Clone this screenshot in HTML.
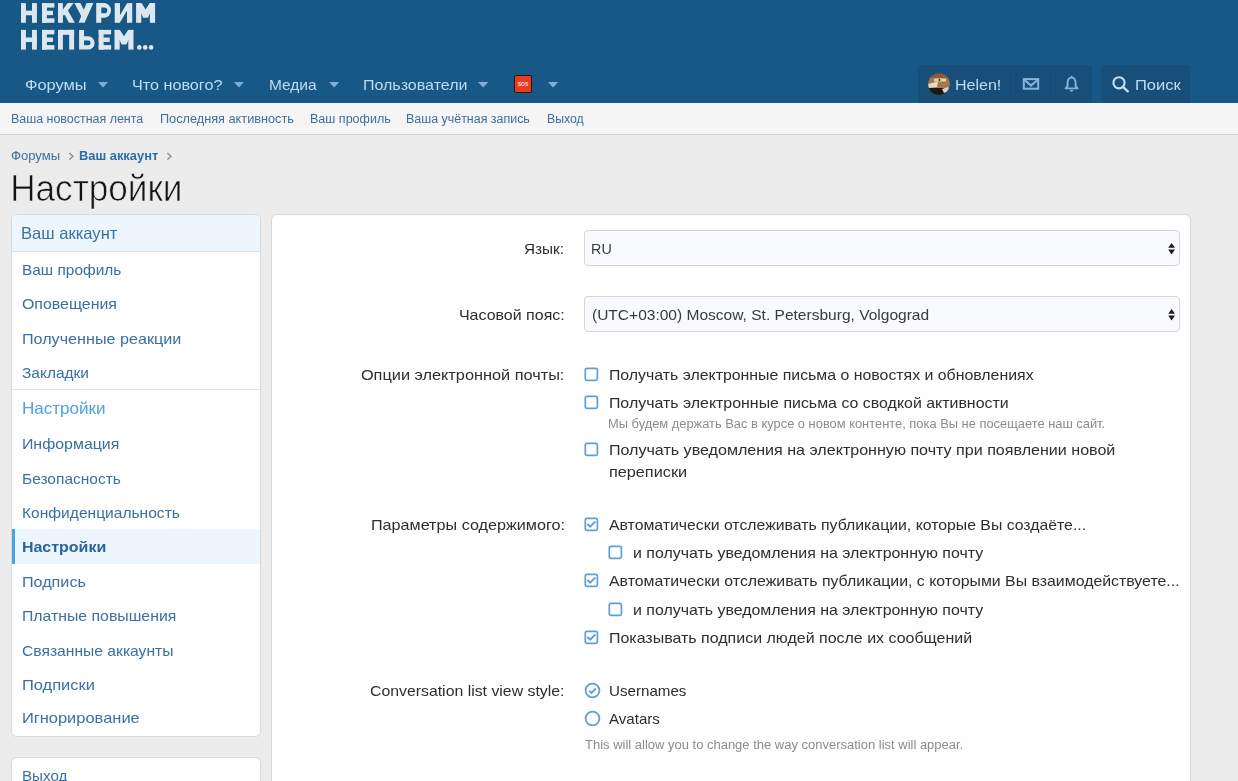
<!DOCTYPE html>
<html><head><meta charset="utf-8"><style>
html,body{margin:0;padding:0}
body{width:1238px;height:781px;overflow:hidden;position:relative;background:#ececec;font-family:"Liberation Sans", sans-serif}
.t{position:absolute;white-space:nowrap}
</style></head><body>
<div style="position:absolute;left:0px;top:0px;width:1238px;height:103px;background:#185886"></div>
<svg style="position:absolute;left:0;top:0" width="170" height="60" viewBox="0 0 170 60"><g fill="#dde7f0"><rect x="21" y="3.1" width="4.90" height="19.70"/><rect x="32" y="3.1" width="4.90" height="19.70"/><rect x="21" y="10.650000000000002" width="15.80" height="4.60"/><rect x="42" y="3.1" width="4.90" height="19.70"/><rect x="42" y="3.1" width="12.40" height="4.50"/><rect x="42" y="10.75" width="11.00" height="4.40"/><rect x="42" y="18.3" width="12.40" height="4.50"/><rect x="58" y="3.1" width="4.90" height="19.70"/><polygon points="62.50,10.20 67.60,3.10 73.60,3.10 64.50,15.20 62.50,15.20"/><polygon points="64.20,13.60 67.60,10.00 74.90,22.80 68.90,22.80"/><polygon points="86.60,3.10 93.40,3.10 84.60,22.80 78.60,22.80"/><polygon points="74.40,3.10 80.40,3.10 85.80,13.80 83.00,19.60"/><path fill-rule="evenodd" d="M96.2 3.1 H104 A7 7.35 0 0 1 104 17.8 H101.3 V22.8 H96.2 Z M101.3 7.6 V13.3 H104.4 A2.85 2.85 0 0 0 104.4 7.6 Z"/><rect x="114.7" y="3.1" width="5.30" height="19.70"/><rect x="127" y="3.1" width="5.20" height="19.70"/><polygon points="119.80,15.60 127.20,3.10 127.20,10.30 119.80,22.80"/><rect x="136.1" y="3.1" width="5.20" height="19.70"/><rect x="149.9" y="3.1" width="5.20" height="19.70"/><polygon points="136.10,3.10 141.50,3.10 145.60,9.50 149.70,3.10 155.10,3.10 147.90,17.80 143.30,17.80"/><rect x="21" y="29.9" width="4.90" height="19.70"/><rect x="32" y="29.9" width="4.90" height="19.70"/><rect x="21" y="37.45" width="15.80" height="4.60"/><rect x="42" y="29.9" width="4.90" height="19.70"/><rect x="42" y="29.9" width="12.40" height="4.50"/><rect x="42" y="37.55" width="11.00" height="4.40"/><rect x="42" y="45.1" width="12.40" height="4.50"/><rect x="58" y="29.9" width="16.10" height="4.90"/><rect x="58" y="29.9" width="4.90" height="19.70"/><rect x="69.2" y="29.9" width="4.90" height="19.70"/><path fill-rule="evenodd" d="M79.1 29.9 H84 V36.3 H88 A6.65 6.65 0 0 1 88 49.6 H79.1 Z M84 40.6 V45.3 H88.2 A2.35 2.35 0 0 0 88.2 40.6 Z"/><rect x="98.7" y="29.9" width="4.90" height="19.70"/><rect x="98.7" y="29.9" width="12.40" height="4.50"/><rect x="98.7" y="37.55" width="11.00" height="4.40"/><rect x="98.7" y="45.1" width="12.40" height="4.50"/><rect x="114.5" y="29.9" width="5.20" height="19.70"/><rect x="128.3" y="29.9" width="5.20" height="19.70"/><polygon points="114.50,29.90 119.90,29.90 124.00,36.30 128.10,29.90 133.50,29.90 126.30,44.50 121.70,44.50"/><circle cx="139.3" cy="47.4" r="2.3"/><circle cx="145.2" cy="47.4" r="2.3"/><circle cx="151.1" cy="47.4" r="2.3"/></g></svg>
<div class="t" style="left:25.18px;top:77px;font-size:15.00px;line-height:15.00px;color:#bfdcf4;font-weight:normal;transform:scaleX(1.0949);transform-origin:0.82px 0;">Форумы</div>
<svg style="position:absolute;left:98px;top:82px;overflow:visible" width="10" height="5.5"><polygon points="0,0 10,0 5.0,5.5" fill="#80afd9"/></svg>
<div class="t" style="left:132.00px;top:77px;font-size:15.00px;line-height:15.00px;color:#bfdcf4;font-weight:normal;transform:scaleX(1.0798);transform-origin:1.20px 0;">Что нового?</div>
<svg style="position:absolute;left:233.7px;top:82px;overflow:visible" width="9.800000000000011" height="5.5"><polygon points="0,0 9.800000000000011,0 4.900000000000006,5.5" fill="#80afd9"/></svg>
<div class="t" style="left:268.90px;top:77px;font-size:15.00px;line-height:15.00px;color:#bfdcf4;font-weight:normal;transform:scaleX(1.0328);transform-origin:1.20px 0;">Медиа</div>
<svg style="position:absolute;left:329px;top:82px;overflow:visible" width="10.199999999999989" height="5.5"><polygon points="0,0 10.199999999999989,0 5.099999999999994,5.5" fill="#80afd9"/></svg>
<div class="t" style="left:363.00px;top:77px;font-size:15.00px;line-height:15.00px;color:#bfdcf4;font-weight:normal;transform:scaleX(1.0679);transform-origin:1.20px 0;">Пользователи</div>
<svg style="position:absolute;left:477.8px;top:82px;overflow:visible" width="10.300000000000011" height="5.5"><polygon points="0,0 10.300000000000011,0 5.150000000000006,5.5" fill="#80afd9"/></svg>
<div style="position:absolute;left:514px;top:75px;width:18px;height:18px;background:#ec3b1c;border:1px solid #2a1410;box-sizing:border-box;border-radius:2px"></div>
<div style="position:absolute;left:514px;top:81px;width:18px;text-align:center;font:bold 5px/6px 'Liberation Sans',sans-serif;color:#fde">SOS</div>
<svg style="position:absolute;left:547.8px;top:82px;overflow:visible" width="10.200000000000045" height="5.5"><polygon points="0,0 10.200000000000045,0 5.100000000000023,5.5" fill="#80afd9"/></svg>
<div style="position:absolute;left:918px;top:65px;width:174px;height:38px;background:#174f7a;border-radius:4px 4px 0 0"></div>
<div style="position:absolute;left:1010px;top:65px;width:1px;height:38px;background:#154a73"></div>
<div style="position:absolute;left:1050px;top:65px;width:1px;height:38px;background:#154a73"></div>
<svg style="position:absolute;left:928px;top:73px" width="22" height="22" viewBox="0 0 22 22"><defs><clipPath id="av"><circle cx="11" cy="11" r="10.8"/></clipPath></defs><filter id="avb"><feGaussianBlur stdDeviation="0.55"/></filter><g clip-path="url(#av)"><g filter="url(#avb)">
<rect width="22" height="22" fill="#a5764c"/>
<rect x="0" y="0" width="22" height="5" fill="#8a5c38"/>
<rect x="6" y="5.5" width="12" height="3" fill="#e6cda6"/>
<circle cx="11.5" cy="7" r="0.9" fill="#2a1a10"/>
<polygon points="0,11 10,8.5 9,14 0,15" fill="#e8dcc0"/>
<rect x="0" y="15" width="22" height="7" fill="#1c1410"/>
<polygon points="14,16 20,14 22,18 16,20" fill="#d9d2c0"/>
</g></g></svg>
<div class="t" style="left:954.70px;top:77px;font-size:15.00px;line-height:15.00px;color:#bfdcf4;font-weight:normal;transform:scaleX(1.0686);transform-origin:1.20px 0;">Helen!</div>
<svg style="position:absolute;left:1022px;top:77px" width="18" height="14" viewBox="0 0 18 14"><rect x="1.8" y="2.1" width="14.4" height="9.6" fill="none" stroke="#86b4dc" stroke-width="2"/><polyline points="2,2.4 9,8.6 16,2.4" fill="none" stroke="#86b4dc" stroke-width="2"/></svg>
<svg style="position:absolute;left:1063px;top:75px" width="17" height="18" viewBox="0 0 17 18"><path d="M8.6 2.6 C5.6 2.6 4.6 5 4.6 8 L4.6 11.2 L2.6 13.4 L14.6 13.4 L12.6 11.2 L12.6 8 C12.6 5 11.6 2.6 8.6 2.6 Z" fill="none" stroke="#86b4dc" stroke-width="1.9" stroke-linejoin="round"/><path d="M6.8 15 A1.8 1.8 0 0 0 10.4 15 Z" fill="#86b4dc"/><circle cx="8.6" cy="1.8" r="1.1" fill="#86b4dc"/></svg>
<div style="position:absolute;left:1101px;top:65px;width:89px;height:38px;background:#174f7a;border-radius:4px 4px 0 0"></div>
<svg style="position:absolute;left:1111px;top:75px" width="19" height="19" viewBox="0 0 19 19"><circle cx="8" cy="7.8" r="5.6" fill="none" stroke="#c4e0f6" stroke-width="2.1"/><line x1="12" y1="11.8" x2="16.8" y2="16.4" stroke="#c4e0f6" stroke-width="2.3" stroke-linecap="round"/></svg>
<div class="t" style="left:1135.10px;top:77px;font-size:15.00px;line-height:15.00px;color:#bfdcf4;font-weight:normal;transform:scaleX(1.1008);transform-origin:1.20px 0;">Поиск</div>
<div style="position:absolute;left:0px;top:103px;width:1238px;height:31px;background:#f5f5f5"></div>
<div style="position:absolute;left:0px;top:134px;width:1238px;height:1px;background:#cdcdcd"></div>
<div class="t" style="left:10.80px;top:113px;font-size:12.50px;line-height:12.50px;color:#3a6fa1;font-weight:normal;transform:scaleX(0.9954);transform-origin:1.00px 0;">Ваша новостная лента</div>
<div class="t" style="left:159.80px;top:113px;font-size:12.50px;line-height:12.50px;color:#3a6fa1;font-weight:normal;transform:scaleX(1.0175);transform-origin:1.00px 0;">Последняя активность</div>
<div class="t" style="left:309.50px;top:113px;font-size:12.50px;line-height:12.50px;color:#3a6fa1;font-weight:normal;transform:scaleX(1.0025);transform-origin:1.00px 0;">Ваш профиль</div>
<div class="t" style="left:406.40px;top:113px;font-size:12.50px;line-height:12.50px;color:#3a6fa1;font-weight:normal;transform:scaleX(0.9948);transform-origin:1.00px 0;">Ваша учётная запись</div>
<div class="t" style="left:547.00px;top:113px;font-size:12.50px;line-height:12.50px;color:#3a6fa1;font-weight:normal;transform:scaleX(0.981);transform-origin:1.00px 0;">Выход</div>
<div class="t" style="left:10.88px;top:149px;font-size:13.00px;line-height:13.00px;color:#3a6fa1;font-weight:normal;transform:scaleX(1.0052);transform-origin:0.71px 0;">Форумы</div>
<svg style="position:absolute;left:68px;top:152px" width="7" height="8"><polyline points="1.4,1 5,4.2 1.4,7.4" fill="none" stroke="#8a8a8a" stroke-width="1.3"/></svg>
<div class="t" style="left:78.56px;top:149px;font-size:13.00px;line-height:13.00px;color:#2b6ea6;font-weight:bold;transform:scaleX(0.9901);transform-origin:0.84px 0;">Ваш аккаунт</div>
<svg style="position:absolute;left:166px;top:152px" width="7" height="8"><polyline points="1.4,1 5,4.2 1.4,7.4" fill="none" stroke="#8a8a8a" stroke-width="1.3"/></svg>
<div class="t" style="left:9.94px;top:170px;font-size:37.00px;line-height:37.00px;color:#141414;font-weight:normal;transform:scaleX(0.9498);transform-origin:2.96px 0;-webkit-text-stroke:0.7px #ececec;">Настройки</div>
<div style="position:absolute;left:11px;top:214px;width:250px;height:523px;background:#fefefe;border:1px solid #d9d9d9;border-radius:6px;box-sizing:border-box"></div>
<div style="position:absolute;left:12px;top:215px;width:248px;height:36px;background:#edf5fd;border-radius:5px 5px 0 0"></div>
<div style="position:absolute;left:12px;top:251px;width:248px;height:1px;background:#dde1e6"></div>
<div class="t" style="left:21.38px;top:225px;font-size:16.50px;line-height:16.50px;color:#3a70a3;font-weight:normal;transform:scaleX(1.0053);transform-origin:1.32px 0;">Ваш аккаунт</div>
<div class="t" style="left:21.70px;top:262px;font-size:15.00px;line-height:15.00px;color:#3a70a3;font-weight:normal;transform:scaleX(1.0285);transform-origin:1.20px 0;">Ваш профиль</div>
<div class="t" style="left:22.22px;top:296px;font-size:15.00px;line-height:15.00px;color:#3a70a3;font-weight:normal;transform:scaleX(1.0603);transform-origin:0.67px 0;">Оповещения</div>
<div class="t" style="left:21.70px;top:331px;font-size:15.00px;line-height:15.00px;color:#3a70a3;font-weight:normal;transform:scaleX(1.0768);transform-origin:1.20px 0;">Полученные реакции</div>
<div class="t" style="left:22.38px;top:365px;font-size:15.00px;line-height:15.00px;color:#3a70a3;font-weight:normal;transform:scaleX(1.032);transform-origin:0.53px 0;">Закладки</div>
<div style="position:absolute;left:12px;top:389px;width:248px;height:1px;background:#e1e1e1"></div>
<div class="t" style="left:21.58px;top:400px;font-size:16.50px;line-height:16.50px;color:#4ea2de;font-weight:normal;transform:scaleX(1.0337);transform-origin:1.32px 0;">Настройки</div>
<div class="t" style="left:21.70px;top:436px;font-size:15.00px;line-height:15.00px;color:#3a70a3;font-weight:normal;transform:scaleX(1.0611);transform-origin:1.20px 0;">Информация</div>
<div class="t" style="left:21.70px;top:471px;font-size:15.00px;line-height:15.00px;color:#3a70a3;font-weight:normal;transform:scaleX(1.0341);transform-origin:1.20px 0;">Безопасность</div>
<div class="t" style="left:21.70px;top:505px;font-size:15.00px;line-height:15.00px;color:#3a70a3;font-weight:normal;transform:scaleX(1.0381);transform-origin:1.20px 0;">Конфиденциальность</div>
<div style="position:absolute;left:12px;top:529px;width:248px;height:35px;background:#edf5fd"></div>
<div style="position:absolute;left:12px;top:529px;width:3px;height:35px;background:#47a3e3"></div>
<div class="t" style="left:21.92px;top:539px;font-size:15.00px;line-height:15.00px;color:#2765a0;font-weight:bold;transform:scaleX(1.0649);transform-origin:0.98px 0;">Настройки</div>
<div class="t" style="left:21.70px;top:574px;font-size:15.00px;line-height:15.00px;color:#3a70a3;font-weight:normal;transform:scaleX(1.0778);transform-origin:1.20px 0;">Подпись</div>
<div class="t" style="left:21.70px;top:608px;font-size:15.00px;line-height:15.00px;color:#3a70a3;font-weight:normal;transform:scaleX(1.0545);transform-origin:1.20px 0;">Платные повышения</div>
<div class="t" style="left:22.15px;top:643px;font-size:15.00px;line-height:15.00px;color:#3a70a3;font-weight:normal;transform:scaleX(1.0434);transform-origin:0.75px 0;">Связанные аккаунты</div>
<div class="t" style="left:21.70px;top:677px;font-size:15.00px;line-height:15.00px;color:#3a70a3;font-weight:normal;transform:scaleX(1.0984);transform-origin:1.20px 0;">Подписки</div>
<div class="t" style="left:21.70px;top:710px;font-size:15.00px;line-height:15.00px;color:#3a70a3;font-weight:normal;transform:scaleX(1.0974);transform-origin:1.20px 0;">Игнорирование</div>
<div style="position:absolute;left:11px;top:757px;width:250px;height:40px;background:#fefefe;border:1px solid #d9d9d9;border-radius:6px;box-sizing:border-box"></div>
<div class="t" style="left:21.80px;top:768px;font-size:15.00px;line-height:15.00px;color:#3a70a3;font-weight:normal;transform:scaleX(1.0109);transform-origin:1.20px 0;">Выход</div>
<div style="position:absolute;left:271px;top:214px;width:920px;height:600px;background:#fefefe;border:1px solid #d9d9d9;border-radius:6px;box-sizing:border-box"></div>
<div class="t" style="left:524.15px;top:241px;font-size:15.00px;line-height:15.00px;color:#2e2e2e;font-weight:normal;transform:scaleX(1.0202);transform-origin:0.75px 0;">Язык:</div>
<div style="position:absolute;left:584px;top:230px;width:596px;height:36px;background:#f8fafd;border:1px solid #d6d6d6;border-radius:4px;box-sizing:border-box"></div>
<div class="t" style="left:591.40px;top:241px;font-size:15.00px;line-height:15.00px;color:#3a3a3a;font-weight:normal;transform:scaleX(0.9546);transform-origin:1.20px 0;">RU</div>
<svg style="position:absolute;left:1167.5px;top:243px" width="8" height="12"><polygon points="0.2,4.8 3.6,0 7,4.8" fill="#1d1d1d"/><polygon points="0.2,6.6 7,6.6 3.6,11.4" fill="#1d1d1d"/></svg>
<div class="t" style="left:458.80px;top:307px;font-size:15.00px;line-height:15.00px;color:#2e2e2e;font-weight:normal;transform:scaleX(1.0654);transform-origin:1.20px 0;">Часовой пояс:</div>
<div style="position:absolute;left:584px;top:296px;width:596px;height:36px;background:#f8fafd;border:1px solid #d6d6d6;border-radius:4px;box-sizing:border-box"></div>
<div class="t" style="left:591.90px;top:307px;font-size:15.00px;line-height:15.00px;color:#3a3a3a;font-weight:normal;transform:scaleX(1.0355);transform-origin:0.90px 0;">(UTC+03:00) Moscow, St. Petersburg, Volgograd</div>
<svg style="position:absolute;left:1167.5px;top:309px" width="8" height="12"><polygon points="0.2,4.8 3.6,0 7,4.8" fill="#1d1d1d"/><polygon points="0.2,6.6 7,6.6 3.6,11.4" fill="#1d1d1d"/></svg>
<div class="t" style="left:361.32px;top:367px;font-size:15.00px;line-height:15.00px;color:#2e2e2e;font-weight:normal;transform:scaleX(1.0865);transform-origin:0.67px 0;">Опции электронной почты:</div>
<svg style="position:absolute;left:584px;top:367px" width="15" height="15" viewBox="0 0 15 15"><rect x="1.3" y="1.3" width="12.1" height="12.1" rx="1.6" fill="#fff" stroke="#5d9fd6" stroke-width="1.7"/></svg>
<div class="t" style="left:608.70px;top:367px;font-size:15.00px;line-height:15.00px;color:#2e2e2e;font-weight:normal;transform:scaleX(1.0577);transform-origin:1.20px 0;">Получать электронные письма о новостях и обновлениях</div>
<svg style="position:absolute;left:584px;top:395px" width="15" height="15" viewBox="0 0 15 15"><rect x="1.3" y="1.3" width="12.1" height="12.1" rx="1.6" fill="#fff" stroke="#5d9fd6" stroke-width="1.7"/></svg>
<div class="t" style="left:608.70px;top:395px;font-size:15.00px;line-height:15.00px;color:#2e2e2e;font-weight:normal;transform:scaleX(1.0619);transform-origin:1.20px 0;">Получать электронные письма со сводкой активности</div>
<div class="t" style="left:608.20px;top:418px;font-size:12.50px;line-height:12.50px;color:#8c8c8c;font-weight:normal;transform:scaleX(1.0303);transform-origin:1.00px 0;">Мы будем держать Вас в курсе о новом контенте, пока Вы не посещаете наш сайт.</div>
<svg style="position:absolute;left:584px;top:442px" width="15" height="15" viewBox="0 0 15 15"><rect x="1.3" y="1.3" width="12.1" height="12.1" rx="1.6" fill="#fff" stroke="#5d9fd6" stroke-width="1.7"/></svg>
<div class="t" style="left:608.70px;top:442px;font-size:15.00px;line-height:15.00px;color:#2e2e2e;font-weight:normal;transform:scaleX(1.0711);transform-origin:1.20px 0;">Получать уведомления на электронную почту при появлении новой</div>
<div class="t" style="left:608.95px;top:464px;font-size:15.00px;line-height:15.00px;color:#2e2e2e;font-weight:normal;transform:scaleX(1.0849);transform-origin:1.05px 0;">переписки</div>
<div class="t" style="left:370.70px;top:517px;font-size:15.00px;line-height:15.00px;color:#2e2e2e;font-weight:normal;transform:scaleX(1.0785);transform-origin:1.20px 0;">Параметры содержимого:</div>
<svg style="position:absolute;left:584px;top:517px" width="15" height="15" viewBox="0 0 15 15"><rect x="1.3" y="1.3" width="12.1" height="12.1" rx="1.6" fill="#fff" stroke="#5d9fd6" stroke-width="1.7"/><polyline points="3.4,7 6.2,9.6 11.4,4.4" fill="none" stroke="#5d9fd6" stroke-width="2"/></svg>
<div class="t" style="left:608.80px;top:517px;font-size:15.00px;line-height:15.00px;color:#2e2e2e;font-weight:normal;transform:scaleX(1.0537);transform-origin:0.00px 0;">Автоматически отслеживать публикации, которые Вы создаёте...</div>
<svg style="position:absolute;left:608px;top:545px" width="15" height="15" viewBox="0 0 15 15"><rect x="1.3" y="1.3" width="12.1" height="12.1" rx="1.6" fill="#fff" stroke="#5d9fd6" stroke-width="1.7"/></svg>
<div class="t" style="left:632.65px;top:545px;font-size:15.00px;line-height:15.00px;color:#2e2e2e;font-weight:normal;transform:scaleX(1.0617);transform-origin:1.05px 0;">и получать уведомления на электронную почту</div>
<svg style="position:absolute;left:584px;top:573px" width="15" height="15" viewBox="0 0 15 15"><rect x="1.3" y="1.3" width="12.1" height="12.1" rx="1.6" fill="#fff" stroke="#5d9fd6" stroke-width="1.7"/><polyline points="3.4,7 6.2,9.6 11.4,4.4" fill="none" stroke="#5d9fd6" stroke-width="2"/></svg>
<div class="t" style="left:608.80px;top:573px;font-size:15.00px;line-height:15.00px;color:#2e2e2e;font-weight:normal;transform:scaleX(1.0579);transform-origin:0.00px 0;">Автоматически отслеживать публикации, с которыми Вы взаимодействуете...</div>
<svg style="position:absolute;left:608px;top:602px" width="15" height="15" viewBox="0 0 15 15"><rect x="1.3" y="1.3" width="12.1" height="12.1" rx="1.6" fill="#fff" stroke="#5d9fd6" stroke-width="1.7"/></svg>
<div class="t" style="left:632.65px;top:602px;font-size:15.00px;line-height:15.00px;color:#2e2e2e;font-weight:normal;transform:scaleX(1.0617);transform-origin:1.05px 0;">и получать уведомления на электронную почту</div>
<svg style="position:absolute;left:584px;top:630px" width="15" height="15" viewBox="0 0 15 15"><rect x="1.3" y="1.3" width="12.1" height="12.1" rx="1.6" fill="#fff" stroke="#5d9fd6" stroke-width="1.7"/><polyline points="3.4,7 6.2,9.6 11.4,4.4" fill="none" stroke="#5d9fd6" stroke-width="2"/></svg>
<div class="t" style="left:608.70px;top:630px;font-size:15.00px;line-height:15.00px;color:#2e2e2e;font-weight:normal;transform:scaleX(1.065);transform-origin:1.20px 0;">Показывать подписи людей после их сообщений</div>
<div class="t" style="left:370.25px;top:683px;font-size:15.00px;line-height:15.00px;color:#2e2e2e;font-weight:normal;transform:scaleX(1.0555);transform-origin:0.75px 0;">Conversation list view style:</div>
<svg style="position:absolute;left:584px;top:682px" width="17" height="17" viewBox="0 0 17 17"><circle cx="8.5" cy="8.5" r="6.9" fill="#fff" stroke="#5d9fd6" stroke-width="1.8"/><polyline points="5.2,8.7 7.6,11 11.8,6.4" fill="none" stroke="#5d9fd6" stroke-width="1.9"/></svg>
<div class="t" style="left:608.58px;top:683px;font-size:15.00px;line-height:15.00px;color:#2e2e2e;font-weight:normal;transform:scaleX(1.0097);transform-origin:1.12px 0;">Usernames</div>
<svg style="position:absolute;left:584px;top:710px" width="17" height="17" viewBox="0 0 17 17"><circle cx="8.5" cy="8.5" r="6.9" fill="#fff" stroke="#5d9fd6" stroke-width="1.8"/></svg>
<div class="t" style="left:609.10px;top:711px;font-size:15.00px;line-height:15.00px;color:#2e2e2e;font-weight:normal;transform:scaleX(1.0055);transform-origin:0.00px 0;">Avatars</div>
<div class="t" style="left:584.95px;top:739px;font-size:12.50px;line-height:12.50px;color:#8c8c8c;font-weight:normal;transform:scaleX(1.0389);transform-origin:0.25px 0;">This will allow you to change the way conversation list will appear.</div>
</body></html>
